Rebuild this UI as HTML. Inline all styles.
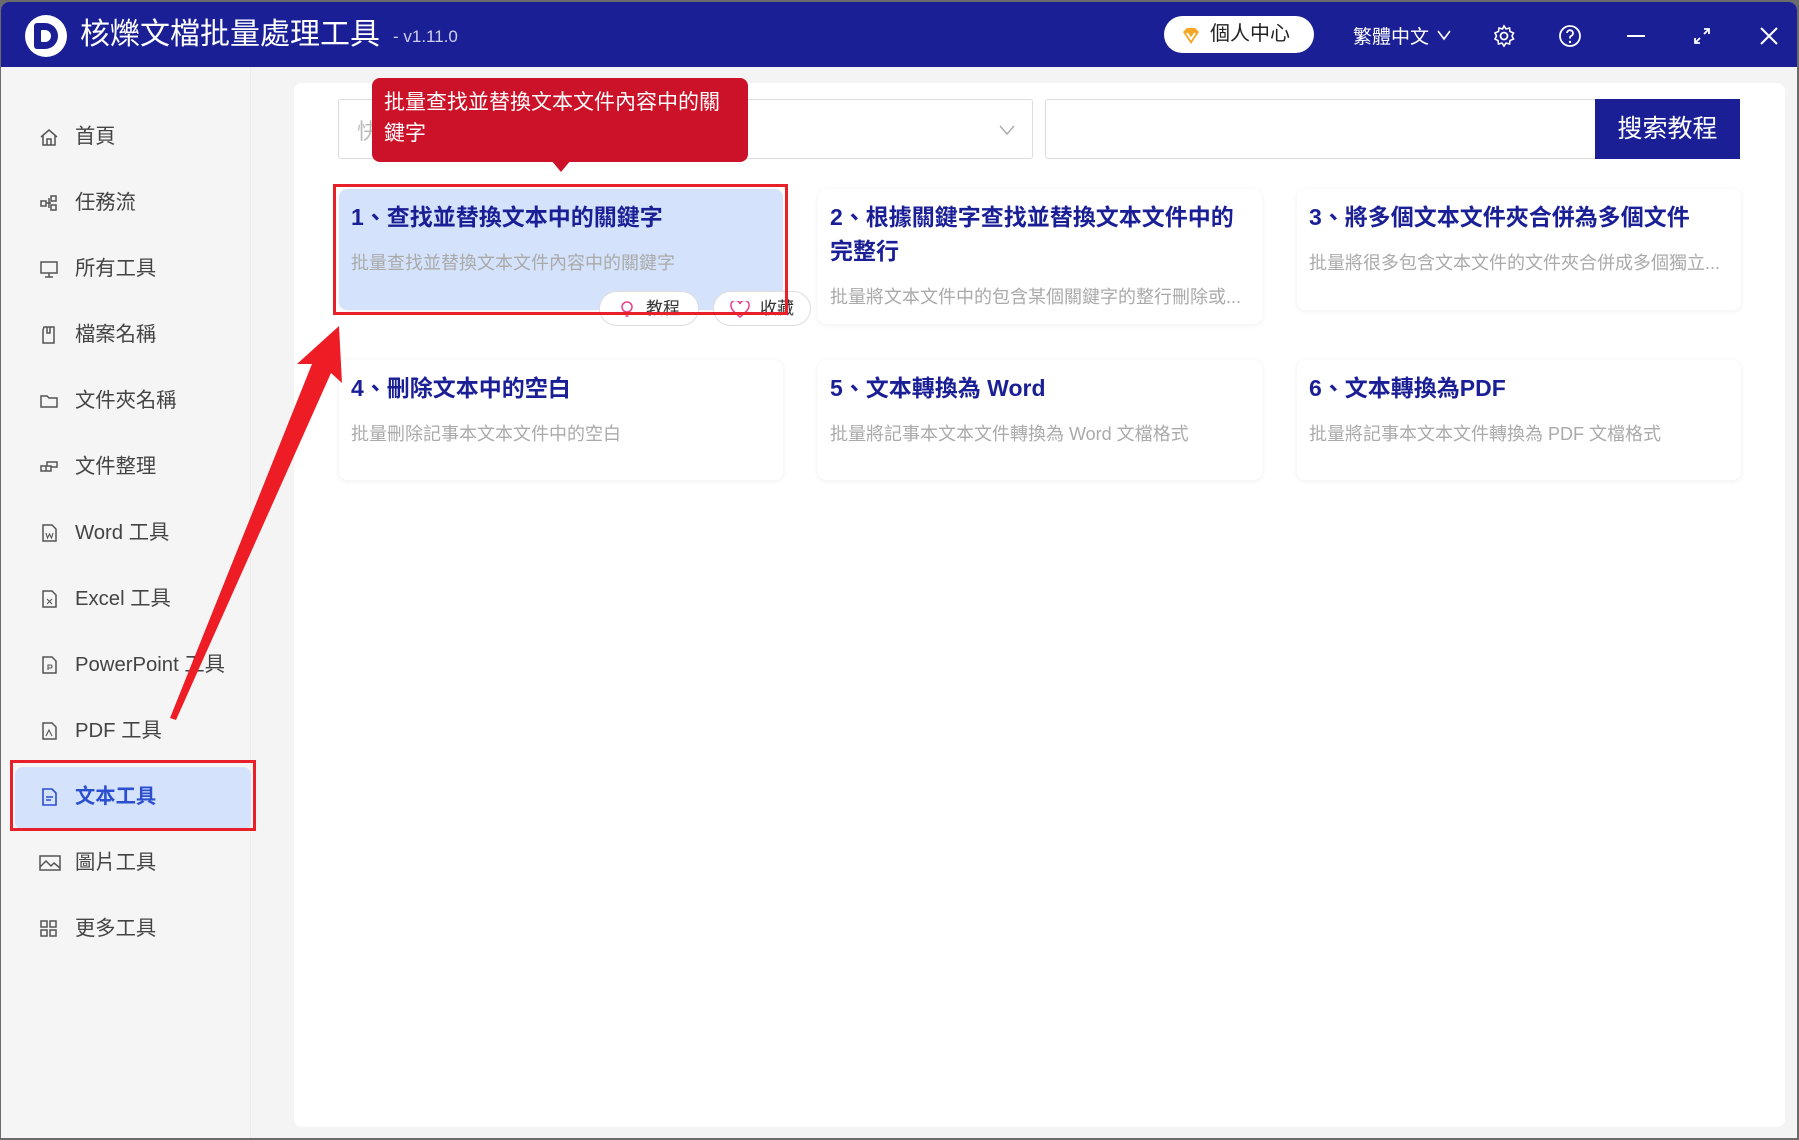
<!DOCTYPE html>
<html><head><meta charset="utf-8"><style>
*{margin:0;padding:0;box-sizing:border-box}
body{width:1799px;height:1140px;overflow:hidden;background:#6b6b6b;font-family:"Liberation Sans","Noto Sans CJK TC",sans-serif;position:relative}
.win{position:absolute;left:1px;top:2px;width:1796px;height:1136px;background:#f4f4f4;border-radius:8px 8px 0 0;overflow:hidden}
.hdr{position:absolute;left:0;top:0;width:100%;height:65px;background:#1a1f96;color:#fff}
.abs{position:absolute}
.side{position:absolute;left:0;top:65px;width:250px;height:1071px;background:#f5f5f5;border-right:1px solid #ececec}
.it{position:absolute;left:0;width:250px;height:40px;font-size:20.3px;color:#444;line-height:40px}
.it svg{position:absolute;left:38px;top:10px}
.it span{position:absolute;left:74px}
.panel{position:absolute;left:293px;top:81px;width:1491px;height:1044px;background:#fff;border-radius:8px}
.card{position:absolute;background:#fff;border-radius:8px;box-shadow:0 1px 6px rgba(0,0,0,.07)}
.card h3{position:absolute;left:12px;top:11px;font-size:23px;color:#1a1f96;font-weight:bold;line-height:34px;width:430px}
.card p{position:absolute;left:12px;font-size:18px;color:#aaa;white-space:nowrap}
.pill{position:absolute;height:35px;border:1px solid #ddd;border-radius:18px;background:#fff;font-size:17px;color:#333;line-height:33px}
</style></head><body>
<div class="win">
<div class="hdr">
 <div class="abs" style="left:24px;top:13px;width:42px;height:42px;border-radius:50%;background:#fff"></div>
 <div class="abs" style="left:33px;top:21px;width:24px;height:26px;border-radius:3px 13px 13px 3px;background:#1a1f96"></div>
 <div class="abs" style="left:40px;top:28px;width:10px;height:12px;border-radius:1px 6px 6px 1px;background:#fff"></div>
 <div class="abs" style="left:79px;top:14px;font-size:30px;line-height:38px">核爍文檔批量處理工具</div>
 <div class="abs" style="left:392px;top:25px;font-size:17px;color:#cfd0ee">- v1.11.0</div>
 <div class="abs" style="left:1163px;top:14px;width:150px;height:37px;border-radius:19px;background:#fff;color:#222;font-size:20px;line-height:37px;padding-left:46px">個人中心</div>
 <svg class="abs" style="left:1180px;top:24px" width="20" height="20" viewBox="0 0 20 20"><path d="M2 6L10 18L18 6L14 2H6Z" fill="#f5a623"/><path d="M6 7L10 13L14 7" stroke="#fff" stroke-width="2" fill="none"/></svg>
 <div class="abs" style="left:1352px;top:20px;font-size:19px">繁體中文</div>
 <svg class="abs" style="left:1436px;top:27px" width="14" height="12"><path d="M1 2L7 10L13 2" stroke="#fff" stroke-width="1.6" fill="none"/></svg>
 <svg class="abs" style="left:1491px;top:22px" width="24" height="24" viewBox="0 0 24 24"><circle cx="12" cy="12" r="3.5" stroke="#fff" stroke-width="1.8" fill="none"/><path d="M12 2l2 3 3.5-1 .5 3.5 3.5 1.5-1.5 3 1.5 3-3.5 1.5-.5 3.5-3.5-1-2 3-2-3-3.5 1-.5-3.5L3 15l1.5-3L3 9l3.5-1.5L7 4l3.5 1z" stroke="#fff" stroke-width="1.6" fill="none"/></svg>
 <svg class="abs" style="left:1557px;top:22px" width="24" height="24" viewBox="0 0 24 24"><circle cx="12" cy="12" r="10" stroke="#fff" stroke-width="1.8" fill="none"/><path d="M9 9a3 3 0 1 1 4 3c-1 .5-1 1-1 2.5" stroke="#fff" stroke-width="1.8" fill="none"/><circle cx="12" cy="18" r="1.2" fill="#fff"/></svg>
 <div class="abs" style="left:1626px;top:33px;width:18px;height:2px;background:#fff"></div>
 <svg class="abs" style="left:1692px;top:25px" width="18" height="18"><path d="M16 2L11 7M2 16L7 11M11 2H16V7M2 11V16H7" stroke="#fff" stroke-width="1.8" fill="none"/></svg>
 <svg class="abs" style="left:1758px;top:24px" width="20" height="20"><path d="M2 2L18 18M18 2L2 18" stroke="#fff" stroke-width="2"/></svg>
</div>
<div class="side">
 <div class="it" style="top:50px"><svg width="20" height="20" viewBox="0 0 20 20" fill="none" stroke="#555" stroke-width="1.5"><path d="M2 10L10 3L18 10M4 8V18H16V8M8 18V12H12V18"/></svg><span>首頁</span></div>
 <div class="it" style="top:116px"><svg width="20" height="20" viewBox="0 0 20 20" fill="none" stroke="#555" stroke-width="1.5"><rect x="2" y="8" width="5" height="5"/><rect x="12" y="3" width="5" height="5"/><rect x="12" y="12" width="5" height="5"/><path d="M7 10H12M10 5V15"/></svg><span>任務流</span></div>
 <div class="it" style="top:182px"><svg width="20" height="20" viewBox="0 0 20 20" fill="none" stroke="#555" stroke-width="1.5"><rect x="2" y="3" width="16" height="11"/><path d="M10 14V18M6 18H14"/></svg><span>所有工具</span></div>
 <div class="it" style="top:248px"><svg width="20" height="20" viewBox="0 0 20 20" fill="none" stroke="#555" stroke-width="1.5"><path d="M5 2H15V18H4V5ZM8 2V8H11V2"/></svg><span>檔案名稱</span></div>
 <div class="it" style="top:314px"><svg width="20" height="20" viewBox="0 0 20 20" fill="none" stroke="#555" stroke-width="1.5"><path d="M2 5H8L10 7H18V16H2Z"/></svg><span>文件夾名稱</span></div>
 <div class="it" style="top:380px"><svg width="20" height="20" viewBox="0 0 20 20" fill="none" stroke="#555" stroke-width="1.5"><path d="M2 14H12V9H2ZM7 9V14M8 9V5H18V10H12"/></svg><span>文件整理</span></div>
 <div class="it" style="top:446px"><svg width="20" height="20" viewBox="0 0 20 20" fill="none" stroke="#555" stroke-width="1.5"><path d="M4 2H13L17 6V18H4Z"/><path d="M7 10L8.5 15L10.5 11L12.5 15L14 10" stroke-width="1.1"/></svg><span>Word 工具</span></div>
 <div class="it" style="top:512px"><svg width="20" height="20" viewBox="0 0 20 20" fill="none" stroke="#555" stroke-width="1.5"><path d="M4 2H13L17 6V18H4Z"/><path d="M8 10L13 15M13 10L8 15" stroke-width="1.1"/></svg><span>Excel 工具</span></div>
 <div class="it" style="top:578px"><svg width="20" height="20" viewBox="0 0 20 20" fill="none" stroke="#555" stroke-width="1.5"><path d="M4 2H13L17 6V18H4Z"/><path d="M9 15V10H11.5A1.5 1.5 0 0 1 11.5 13H9" stroke-width="1.1"/></svg><span>PowerPoint 工具</span></div>
 <div class="it" style="top:644px"><svg width="20" height="20" viewBox="0 0 20 20" fill="none" stroke="#555" stroke-width="1.5"><path d="M4 2H13L17 6V18H4Z"/><path d="M7 15L10 9L13 15" stroke-width="1.1"/></svg><span>PDF 工具</span></div>
 <div class="abs" style="left:14px;top:700px;width:236px;height:63px;border-radius:8px;background:#d4e3fb"></div>
 <div class="it" style="top:710px;color:#2b4fcf;font-weight:bold"><svg width="20" height="20" viewBox="0 0 20 20" fill="none" stroke="#2b4fcf" stroke-width="1.6"><path d="M4 2H13L17 6V18H4Z"/><path d="M7 10H14M7 13H12"/></svg><span>文本工具</span></div>
 <div class="abs" style="left:9px;top:693px;width:246px;height:71px;border:3px solid #e8202a"></div>
 <div class="it" style="top:776px"><svg width="22" height="20" viewBox="0 0 22 20" fill="none" stroke="#555" stroke-width="1.5"><rect x="1" y="3" width="20" height="14"/><path d="M1 14L7 8L12 13L15 10L21 15"/></svg><span>圖片工具</span></div>
 <div class="it" style="top:842px"><svg width="20" height="20" viewBox="0 0 20 20" fill="none" stroke="#555" stroke-width="1.5"><rect x="2" y="2" width="6" height="6"/><rect x="11" y="2" width="6" height="6"/><rect x="2" y="11" width="6" height="6"/><rect x="11" y="11" width="6" height="6"/></svg><span>更多工具</span></div>
</div>
<div class="panel"></div>
<div class="abs" style="left:337px;top:97px;width:695px;height:60px;border:1px solid #ddd;border-radius:3px;background:#fff"><span class="abs" style="left:18px;top:14px;font-size:22px;color:#bbb">快</span><svg class="abs" style="left:660px;top:24px" width="16" height="12"><path d="M1 2L8 10L15 2" stroke="#aaa" stroke-width="1.4" fill="none"/></svg></div>
<div class="abs" style="left:1044px;top:97px;width:552px;height:60px;border:1px solid #ddd;border-radius:3px 0 0 3px;background:#fff"></div>
<div class="abs" style="left:1594px;top:97px;width:145px;height:60px;background:#1a1f96;color:#fff;font-size:25px;line-height:60px;text-align:center">搜索教程</div>

<div class="card" style="left:338px;top:187px;width:444px;height:121px;background:#d4e3fb"><h3>1、查找並替換文本中的關鍵字</h3><p style="top:60px">批量查找並替換文本文件內容中的關鍵字</p></div>
<div class="card" style="left:817px;top:187px;width:444px;height:135px"><h3 style="width:408px">2、根據關鍵字查找並替換文本文件中的完整行</h3><p style="top:94px">批量將文本文件中的包含某個關鍵字的整行刪除或...</p></div>
<div class="card" style="left:1296px;top:187px;width:444px;height:121px"><h3>3、將多個文本文件夾合併為多個文件</h3><p style="top:60px">批量將很多包含文本文件的文件夾合併成多個獨立...</p></div>
<div class="card" style="left:338px;top:358px;width:444px;height:120px"><h3>4、刪除文本中的空白</h3><p style="top:60px">批量刪除記事本文本文件中的空白</p></div>
<div class="card" style="left:817px;top:358px;width:444px;height:120px"><h3>5、文本轉換為 Word</h3><p style="top:60px">批量將記事本文本文件轉換為 Word 文檔格式</p></div>
<div class="card" style="left:1296px;top:358px;width:444px;height:120px"><h3>6、文本轉換為PDF</h3><p style="top:60px">批量將記事本文本文件轉換為 PDF 文檔格式</p></div>

<div class="pill" style="left:598px;top:289px;width:100px;padding-left:46px">教程<svg class="abs" style="left:20px;top:8px" width="14" height="18"><circle cx="7" cy="7" r="5" stroke="#e83e8c" stroke-width="1.5" fill="none"/><path d="M5 13H9M5.5 16H8.5" stroke="#e83e8c" stroke-width="1.4"/></svg></div>
<div class="pill" style="left:712px;top:289px;width:98px;padding-left:46px">收藏<svg class="abs" style="left:16px;top:9px" width="20" height="17" viewBox="0 0 20 17"><path d="M10 16C4 11 1 8 1 5A4 4 0 0 1 10 3A4 4 0 0 1 19 5C19 8 16 11 10 16Z" stroke="#e83e8c" stroke-width="1.5" fill="none"/></svg></div>
<div class="abs" style="left:332px;top:182px;width:455px;height:131px;border:3px solid #e8202a"></div>

<div class="abs" style="left:371px;top:76px;width:376px;height:84px;background:#cc1228;border-radius:8px;color:#fff;font-size:21px;line-height:31px;padding:9px 12px;white-space:nowrap">批量查找並替換文本文件內容中的關<br>鍵字</div>
<div class="abs" style="left:550px;top:158px;width:0;height:0;border-left:10px solid transparent;border-right:10px solid transparent;border-top:12px solid #cc1228"></div>

<svg class="abs" style="left:0;top:0" width="1799" height="1140"><polygon points="338,324 341,381 330,371 175,718 169,716 311,362 296,362" fill="#ee1c25"/></svg>
</div>
</body></html>
